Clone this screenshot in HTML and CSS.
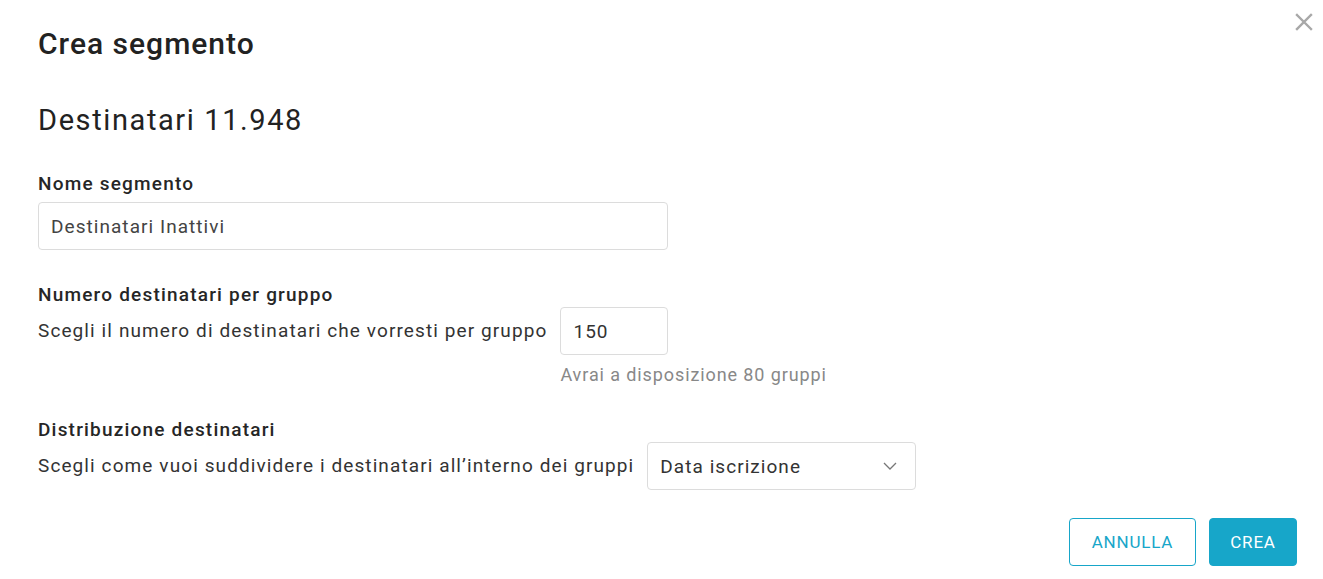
FILE: index.html
```html
<!DOCTYPE html>
<html lang="it">
<head>
<meta charset="utf-8">
<title>Crea segmento</title>
<link rel="stylesheet" href="styles.css">
</head>
<body>
<div class="modal">
  <button class="close" aria-label="Chiudi">
    <svg width="18" height="18" viewBox="0 0 18 18"><path d="M2 2L16 16M16 2L2 16" stroke="#a8a8a8" stroke-width="2.4" stroke-linecap="square"/></svg>
  </button>
  <h1 class="title">Crea segmento</h1>
  <h2 class="count">Destinatari 11.948</h2>

  <div class="field first">
    <div class="label">Nome segmento</div>
    <div class="input wide">Destinatari Inattivi</div>
  </div>

  <div class="field">
    <div class="label">Numero destinatari per gruppo</div>
    <div class="row">
      <span class="desc">Scegli il numero di destinatari che vorresti per gruppo</span>
      <div class="numcol">
        <div class="input small">150</div>
        <div class="hint">Avrai a disposizione 80 gruppi</div>
      </div>
    </div>
  </div>

  <div class="field">
    <div class="label">Distribuzione destinatari</div>
    <div class="row">
      <span class="desc">Scegli come vuoi suddividere i destinatari all’interno dei gruppi</span>
      <div class="input select">
        <span>Data iscrizione</span>
        <svg width="14" height="8" viewBox="0 0 14 8"><path d="M1 1L7 7L13 1" fill="none" stroke="#777" stroke-width="1.3"/></svg>
      </div>
    </div>
  </div>

  <div class="actions">
    <button class="btn outline">ANNULLA</button>
    <button class="btn primary">CREA</button>
  </div>
</div>
</body>
</html>
```

FILE: styles.css
```css
* { box-sizing: border-box; }
html, body { margin: 0; background: #fff; }
body {
  font-family: Roboto, "Noto Sans", sans-serif;
  color: #222;
  width: 1323px;
  height: 579px;
  overflow: hidden;
}
.modal {
  position: relative;
  padding: 26px 26px 14px 38px;
  display: flex;
  flex-direction: column;
}
.close {
  position: absolute;
  top: 13px;
  right: 10px;
  background: none;
  border: 0;
  padding: 0;
  width: 18px;
  height: 18px;
  cursor: pointer;
}
.close svg { display: block; }
.title {
  margin: 0;
  font-size: 30px;
  font-weight: 500;
  letter-spacing: 1px;
  line-height: 36px;
  color: #222;
}
.count {
  margin: 40px 0 0;
  font-size: 29px;
  font-weight: 400;
  letter-spacing: 1.6px;
  line-height: 36px;
  color: #222;
}
.field { margin-top: 33px; }
.field.first { margin-top: 34px; }
.label {
  font-size: 19px;
  font-weight: 500;
  letter-spacing: 1.2px;
  line-height: 24px;
  color: #262626;
}
.input {
  border: 1px solid #dcdcdc;
  border-radius: 4px;
  height: 48px;
  display: flex;
  align-items: center;
  padding: 0 12px;
  font-size: 19px;
  letter-spacing: 1.05px;
  color: #444;
}
.wide { width: 630px; margin-top: 6px; }
.row {
  display: flex;
  align-items: flex-start;
  gap: 13px;
  margin-top: 0;
}
.desc {
  font-size: 19px;
  letter-spacing: 1.1px;
  line-height: 48px;
  color: #333;
}
.small { width: 108px; color: #333; }
.hint {
  margin-top: 9px;
  font-size: 18px;
  line-height: 21px;
  letter-spacing: 0.9px;
  color: #888;
  white-space: nowrap;
}
.select {
  width: 269px;
  justify-content: space-between;
  padding-right: 18px;
  color: #333;
}
.actions {
  display: flex;
  justify-content: flex-end;
  gap: 13px;
  margin-top: 28px;
}
.btn {
  height: 48px;
  border-radius: 4px;
  font-family: Roboto, sans-serif;
  font-size: 17px;
  font-weight: 400;
  letter-spacing: 0.8px;
  padding: 0;
  cursor: pointer;
}
.outline {
  width: 127px;
  background: #fff;
  border: 1px solid #17a6c9;
  color: #17a6c9;
}
.primary {
  width: 88px;
  background: #17a6c9;
  border: 1px solid #17a6c9;
  color: #fff;
}
```
